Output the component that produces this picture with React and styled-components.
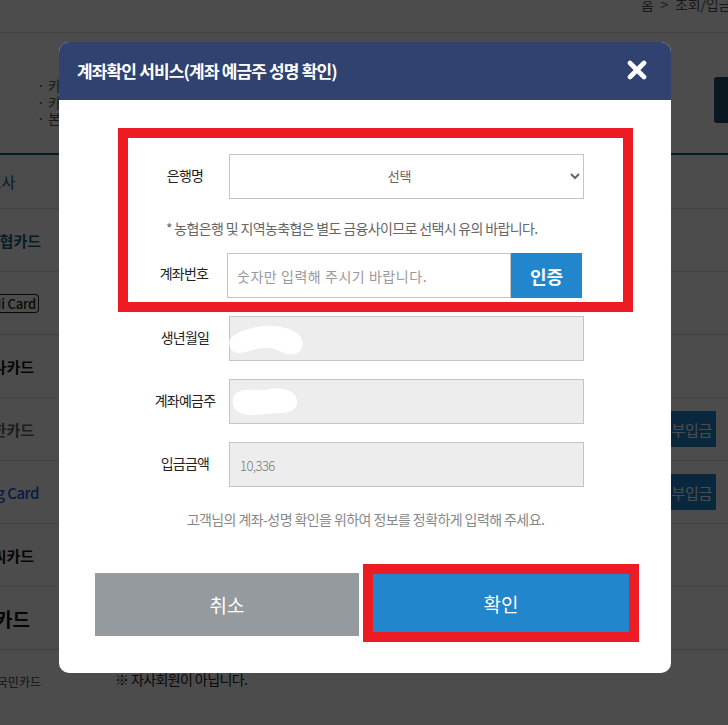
import React from 'react';
import styled, { createGlobalStyle } from 'styled-components';

const GlobalStyle = createGlobalStyle`
  html, body {
    margin: 0;
    padding: 0;
    background: #fff;
    font-family: "Noto Sans CJK KR", "Noto Sans", sans-serif;
  }
  * { box-sizing: border-box; }
`;

/* page behind the dialog */
const Page = styled.div`
  position: relative;
  width: 728px;
  height: 725px;
  overflow: hidden;
  background: #fff;
`;
const TopBar = styled.div`
  height: 33px;
  border-bottom: 1px solid #ddd;
  display: flex;
  white-space: nowrap;
  font-size: 14px;
  color: #555;
  line-height: 8px;
  padding-left: 641px;
  overflow: hidden;
`;
const Crumb = styled.span`
  flex: none;
  word-spacing: 4px;
  letter-spacing: -0.2px;
`;
const Notice = styled.div`
  height: 122px;
  border-bottom: 2px solid #15607f;
  display: flex;
  align-items: flex-start;
  justify-content: space-between;
  padding: 44px 0 0 37px;
`;
const NoticeList = styled.ul`
  list-style: none;
  margin: 0;
  padding: 0;
  font-size: 14px;
  line-height: 16.5px;
  color: #555;
`;
const PayButton = styled.div`
  width: 14px;
  height: 46px;
  background: #214d71;
  border-radius: 3px 0 0 3px;
`;
const Head = styled.div`
  height: 53px;
  background: #fafafa;
  display: flex;
  align-items: center;
  font-size: 15px;
  color: #15607f;
  margin-left: -26px;
`;
const CardRow = styled.div`
  height: 63px;
  border-top: 1px solid #ddd;
  display: flex;
  align-items: center;
  justify-content: space-between;
  padding-right: 12px;
`;
const CardName = styled.div`
  width: 59px;
  height: 30px;
  display: flex;
  align-items: center;
  justify-content: flex-end;
  overflow: hidden;
  white-space: nowrap;
  padding-right: ${p => p.$pad || 18}px;
  font-size: ${p => p.$size || 15}px;
  font-weight: ${p => p.$weight || 700};
  letter-spacing: ${p => p.$track || 0}px;
  color: ${p => p.$color || '#111'};
`;
const Outlined = styled.span`
  border: 1.5px solid #222;
  border-left: 0;
  border-radius: 0 4px 4px 0;
  padding: 0 2px 0 0;
  font-size: 13px;
  line-height: 17px;
  letter-spacing: -0.2px;
  color: #222;
`;
const RowButton = styled.div`
  width: 90px;
  height: 36px;
  background: #2186cb;
  color: #fff;
  font-size: 15px;
  letter-spacing: -0.3px;
  display: flex;
  align-items: center;
  justify-content: flex-end;
  padding-right: 4px;
`;
const Remark = styled.span`
  flex: 1;
  margin-left: 56px;
  margin-bottom: 4px;
  font-size: 14px;
  letter-spacing: -0.6px;
  color: #222;
`;

/* dim layer + dialog */
const Dim = styled.div`
  position: absolute;
  inset: 0;
  background: rgba(0, 0, 0, 0.7);
  padding: 42px 0 0 59px;
`;
const Modal = styled.div`
  width: 612px;
  height: 631px;
  background: #fff;
  border-radius: 10px;
  overflow: hidden;
`;
const ModalHeader = styled.div`
  height: 58px;
  background: #2f4270;
  display: flex;
  align-items: center;
  justify-content: space-between;
  padding: 0 24px 2px 18px;
  color: #fff;
`;
const Title = styled.h2`
  margin: 0;
  font-size: 17px;
  font-weight: 700;
  letter-spacing: -0.85px;
`;
const CloseIcon = styled.svg`
  display: block;
  width: 20px;
  height: 20px;
`;
const Body = styled.div`
  padding: 28px 0 0;
`;
const Highlight = styled.div`
  width: 515px;
  height: 184px;
  margin-left: 59px;
  border: 10px solid #ed1c24;
  padding-top: 16px;
`;
const Row = styled.div`
  display: flex;
  align-items: center;
  height: 45px;
  margin-left: ${p => p.$left || 0}px;
  margin-top: ${p => p.$top || 0}px;
`;
const Label = styled.label`
  flex: none;
  width: ${p => p.$width || 88}px;
  text-align: center;
  font-size: 14px;
  letter-spacing: -0.75px;
  color: #222;
  padding-bottom: ${p => p.$lift || 4}px;
`;
const BankSelect = styled.select`
  width: 355px;
  height: 45px;
  border: 1px solid #c4c4c4;
  border-radius: 0;
  background: #fff;
  color: #666;
  font-family: inherit;
  font-size: 13px;
  text-align: center;
  text-align-last: center;
  letter-spacing: -0.3px;
  padding: 0 6px 2px 4px;
  outline: none;
`;
const Hint = styled.p`
  margin: 0;
  height: 54px;
  padding: 20px 0 0 38px;
  font-size: 14px;
  line-height: 18px;
  letter-spacing: -0.65px;
  color: #666;
  white-space: nowrap;
`;
const AccountInput = styled.input`
  width: 284px;
  height: 45px;
  border: 1px solid #c4c4c4;
  border-radius: 0;
  padding: 1px 9px 0;
  font-family: inherit;
  font-size: 14px;
  letter-spacing: 0.55px;
  outline: none;
  &::placeholder { color: #999; opacity: 1; }
`;
const VerifyButton = styled.button`
  width: 71px;
  height: 45px;
  border: 0;
  background: #2186cb;
  color: #fff;
  font-family: inherit;
  font-size: 18px;
  font-weight: 700;
  padding: 0;
`;
const ReadOnlyField = styled.div`
  position: relative;
  width: 355px;
  height: 45px;
  border: 1px solid #c4c4c4;
  background: #ededed;
  color: #777;
  font-size: 13px;
  font-weight: 300;
  letter-spacing: -0.55px;
  line-height: 45px;
  padding-left: 10px;
`;
const Redaction = styled.svg`
  position: absolute;
  left: ${p => p.$x}px;
  top: ${p => p.$y}px;
`;
const Guide = styled.p`
  margin: 20px 0 0;
  height: 24px;
  text-align: center;
  font-size: 14px;
  line-height: 24px;
  letter-spacing: -0.58px;
  color: #888;
  padding-left: 1px;
  white-space: nowrap;
`;
const Actions = styled.div`
  display: flex;
  align-items: flex-start;
  margin-top: 33px;
  padding-left: 36px;
`;
const Cancel = styled.button`
  width: 264px;
  height: 63px;
  margin-top: 9px;
  border: 0;
  background: #949a9e;
  color: #fff;
  font-family: inherit;
  font-size: 19px;
  padding: 0;
`;
const Confirm = styled.button`
  width: 276px;
  height: 78px;
  margin-left: 4px;
  border: 10px solid #ed1c24;
  background: #2186cb;
  color: #fff;
  font-family: inherit;
  font-size: 19px;
  padding: 0;
`;

const rows = [
  { text: '하나카드', size: 15, color: '#111', pad: 25 },
  { text: '신한카드', size: 15, color: '#666', pad: 25, button: true },
  { text: 'Samsung Card', size: 15, color: '#1a55e8', pad: 20, weight: 500, track: -0.5, button: true },
  { text: 'BC비씨카드', size: 15, color: '#111', pad: 25 },
  { text: '롯데카드', size: 19, color: '#111', pad: 29 },
];

export default function App() {
  return (
    <>
      <GlobalStyle />
      <Page>
        <TopBar>
          <Crumb>홈 &gt; 조회/입금</Crumb>
        </TopBar>
        <Notice>
          <NoticeList>
            <li>· 카드</li>
            <li>· 카드</li>
            <li>· 본인</li>
          </NoticeList>
          <PayButton />
        </Notice>
        <Head>카드사</Head>
        <CardRow>
          <CardName $color="#15607f">NH농협카드</CardName>
        </CardRow>
        <CardRow>
          <CardName $pad={20} $weight={500}>
            <Outlined>Hi Card</Outlined>
          </CardName>
        </CardRow>
        {rows.map(r => (
          <CardRow key={r.text}>
            <CardName $color={r.color} $size={r.size} $pad={r.pad} $weight={r.weight} $track={r.track}>
              {r.text}
            </CardName>
            {r.button && <RowButton>전부입금</RowButton>}
          </CardRow>
        ))}
        <CardRow>
          <CardName $size={12} $weight={500} $color="#666">KB국민카드</CardName>
          <Remark>※ 자사회원이 아닙니다.</Remark>
        </CardRow>
        <Dim>
          <Modal>
            <ModalHeader>
              <Title>계좌확인 서비스(계좌 예금주 성명 확인)</Title>
              <CloseIcon viewBox="0 0 20 20" aria-label="닫기">
                <path d="M3 3 L17 17 M17 3 L3 17" stroke="#fff" strokeWidth="4.6" strokeLinecap="round" />
              </CloseIcon>
            </ModalHeader>
            <Body>
              <Highlight>
                <Row $left={13}>
                  <Label>은행명</Label>
                  <BankSelect defaultValue="">
                    <option value="">선택</option>
                  </BankSelect>
                </Row>
                <Hint>* 농협은행 및 지역농축협은 별도 금융사이므로 선택시 유의 바랍니다.</Hint>
                <Row $left={13}>
                  <Label $width={86} $lift={6}>계좌번호</Label>
                  <AccountInput placeholder="숫자만 입력해 주시기 바랍니다." />
                  <VerifyButton>인증</VerifyButton>
                </Row>
              </Highlight>
              <Row $left={82} $top={4}>
                <Label>생년월일</Label>
                <ReadOnlyField>
                  <Redaction $x={-1} $y={8} width="75" height="31" viewBox="0 0 75 31">
                    <path d="M1 14 C8 6 20 3 34 1 C48 0 62 3 69 9 C76 15 75 26 66 29 C57 31 50 25 42 23 C30 21 20 28 8 28 C1 27 -1 19 1 14 Z" fill="#fff" />
                  </Redaction>
                </ReadOnlyField>
              </Row>
              <Row $left={82} $top={18}>
                <Label>계좌예금주</Label>
                <ReadOnlyField>
                  <Redaction $x={2} $y={8} width="66" height="28" viewBox="0 0 66 28">
                    <path d="M12 2 C24 1 30 3 38 1 C48 0 62 0 65 12 C66 22 58 25 48 25 C38 25 30 27 20 27 C8 27 0 22 1 13 C1 6 6 3 12 2 Z" fill="#fff" />
                  </Redaction>
                </ReadOnlyField>
              </Row>
              <Row $left={82} $top={18}>
                <Label>입금금액</Label>
                <ReadOnlyField>10,336</ReadOnlyField>
              </Row>
              <Guide>고객님의 계좌-성명 확인을 위하여 정보를 정확하게 입력해 주세요.</Guide>
              <Actions>
                <Cancel>취소</Cancel>
                <Confirm>확인</Confirm>
              </Actions>
            </Body>
          </Modal>
        </Dim>
      </Page>
    </>
  );
}
